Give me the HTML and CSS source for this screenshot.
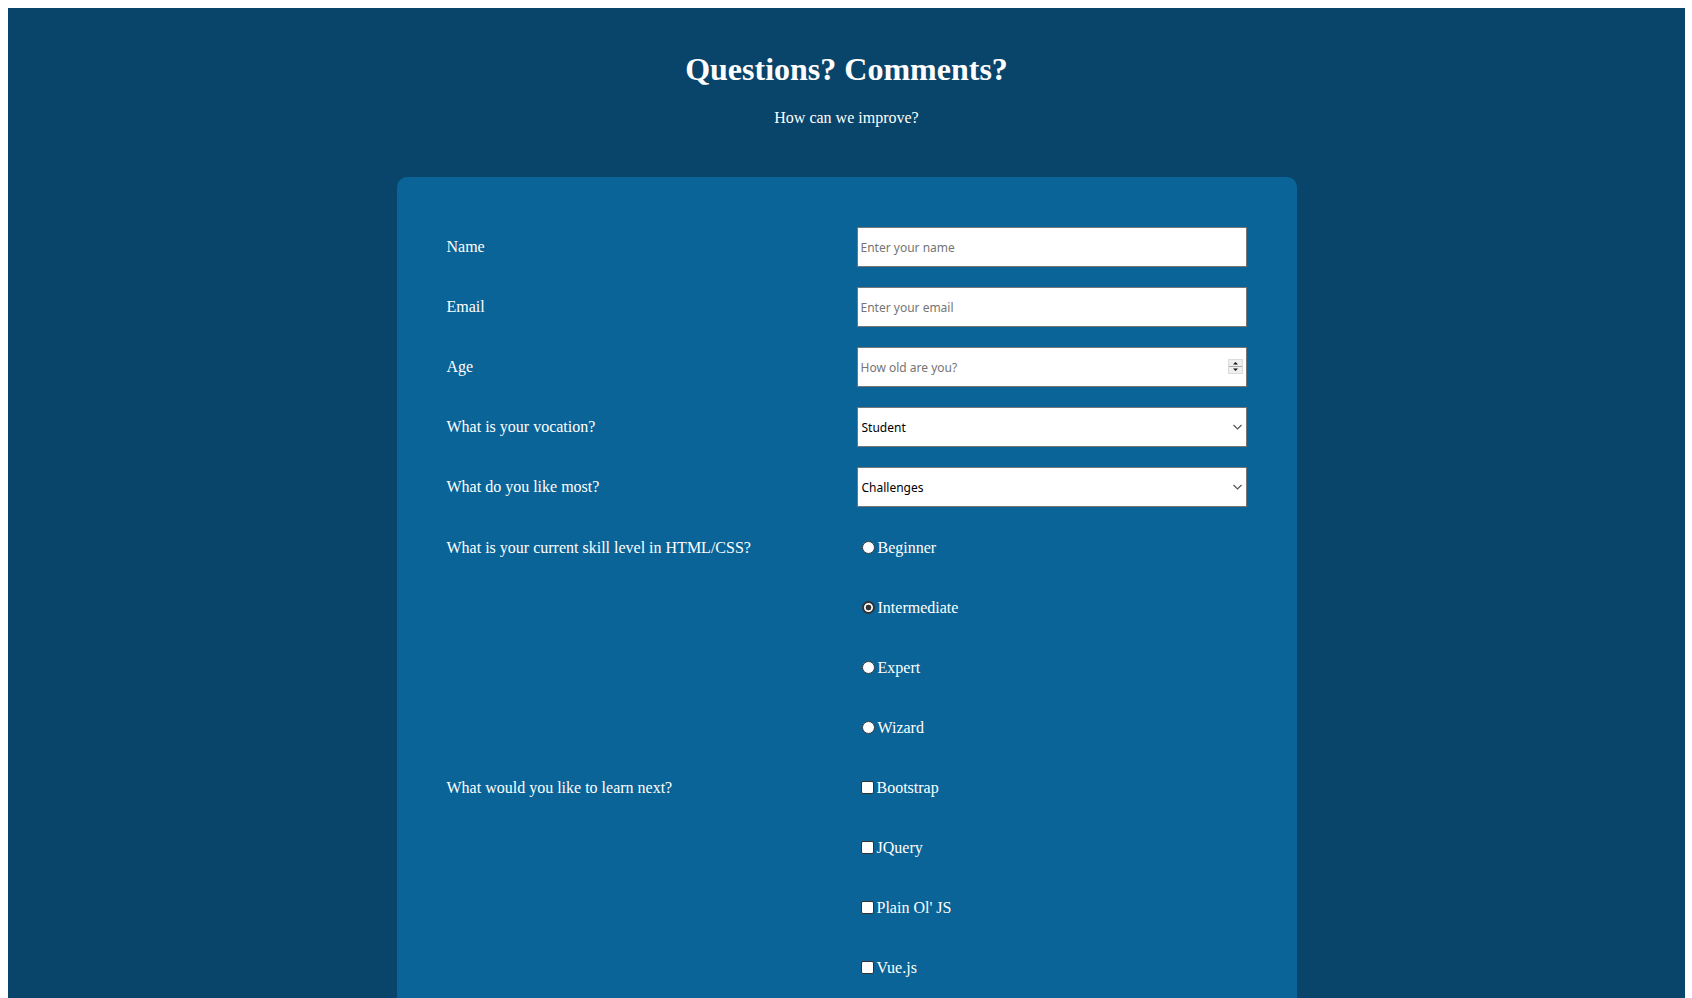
FILE: index.html
```html
<!DOCTYPE html>
<html lang="en">
<head>
<meta charset="utf-8">
<title>Survey Form</title>
<link rel="stylesheet" href="styles.css">
</head>
<body>
<div class="page">
  <header class="intro">
    <h1 class="title">Questions? Comments?</h1>
    <p class="subtitle">How can we improve?</p>
  </header>
  <form class="card">
    <div class="row">
      <label class="row-label" for="name">Name</label>
      <div class="row-field"><input class="text-input" id="name" type="text" placeholder="Enter your name"></div>
    </div>
    <div class="row">
      <label class="row-label" for="email">Email</label>
      <div class="row-field"><input class="text-input" id="email" type="email" placeholder="Enter your email"></div>
    </div>
    <div class="row">
      <label class="row-label" for="age">Age</label>
      <div class="row-field">
        <input class="text-input number-input" id="age" type="number" placeholder="How old are you?">
        <span class="spinner" aria-hidden="true">
          <svg width="15" height="15" viewBox="0 0 15 15">
            <rect x="0.5" y="0.5" width="14" height="14" fill="#efefef" stroke="#dcdcdc"/>
            <line x1="1" y1="7.5" x2="14" y2="7.5" stroke="#a8a8a8"/>
            <path d="M5 5.5 L7.5 3 L10 5.5 Z" fill="#111"/>
            <path d="M5 9.5 L10 9.5 L7.5 12 Z" fill="#111"/>
          </svg>
        </span>
      </div>
    </div>
    <div class="row">
      <label class="row-label" for="vocation">What is your vocation?</label>
      <div class="row-field">
        <select class="select-input" id="vocation">
          <option>Student</option>
          <option>Full-time job</option>
          <option>Prefer not to say</option>
        </select>
        <span class="chevron" aria-hidden="true">
          <svg width="9" height="6" viewBox="0 0 9 6"><path d="M0.5 1 L4.5 5 L8.5 1" fill="none" stroke="#555" stroke-width="1.2"/></svg>
        </span>
      </div>
    </div>
    <div class="row">
      <label class="row-label" for="likes">What do you like most?</label>
      <div class="row-field">
        <select class="select-input" id="likes">
          <option>Challenges</option>
          <option>Projects</option>
          <option>Community</option>
        </select>
        <span class="chevron" aria-hidden="true">
          <svg width="9" height="6" viewBox="0 0 9 6"><path d="M0.5 1 L4.5 5 L8.5 1" fill="none" stroke="#555" stroke-width="1.2"/></svg>
        </span>
      </div>
    </div>
    <div class="row row-group">
      <div class="row-label group-label">What is your current skill level in HTML/CSS?</div>
      <div class="row-field options">
        <label class="option"><input class="radio" type="radio" name="skill" value="beginner">Beginner</label>
        <label class="option"><input class="radio" type="radio" name="skill" value="intermediate" checked>Intermediate</label>
        <label class="option"><input class="radio" type="radio" name="skill" value="expert">Expert</label>
        <label class="option"><input class="radio" type="radio" name="skill" value="wizard">Wizard</label>
      </div>
    </div>
    <div class="row row-group">
      <div class="row-label group-label">What would you like to learn next?</div>
      <div class="row-field options">
        <label class="option"><input class="check" type="checkbox" value="bootstrap">Bootstrap</label>
        <label class="option"><input class="check" type="checkbox" value="jquery">JQuery</label>
        <label class="option"><input class="check" type="checkbox" value="js">Plain Ol' JS</label>
        <label class="option"><input class="check" type="checkbox" value="vue">Vue.js</label>
      </div>
    </div>
  </form>
</div>
</body>
</html>
```

FILE: styles.css
```css
body {
  margin: 8px 7px 8px 8px;
  background: #ffffff;
  font-family: "Liberation Serif", "Times New Roman", serif;
}

.page {
  background: #09456a;
  color: #ffffff;
  padding-bottom: 60px;
}

.intro {
  padding: 43px 0 50px;
  text-align: center;
}

.title {
  margin: 0;
  font-size: 32px;
  font-weight: bold;
}

.subtitle {
  margin: 21px 0 0;
  font-size: 16px;
}

.card {
  width: 900px;
  box-sizing: border-box;
  margin: 0 auto;
  padding: 50px;
  background: #0b6497;
  border-radius: 10px;
}

.row {
  display: flex;
  align-items: center;
  margin-bottom: 20px;
}

.row-group {
  align-items: flex-start;
  padding-top: 1px;
  margin-bottom: 19px;
}

.row-label {
  flex: 0 0 410px;
  font-size: 16px;
  color: #ffffff;
}

.group-label {
  line-height: 40px;
}

.row-field {
  position: relative;
  width: 390px;
}

.text-input,
.select-input {
  display: block;
  width: 100%;
  height: 40px;
  box-sizing: border-box;
  margin: 0;
  border: 1px solid #767676;
  border-radius: 0;
  background: #ffffff;
  font-family: "Noto Sans", "DejaVu Sans", sans-serif;
  font-size: 12px;
  color: #000000;
  outline: none;
}

.text-input {
  padding: 0 3px;
}

.text-input::placeholder {
  color: #757575;
}

.number-input {
  -moz-appearance: textfield;
  appearance: textfield;
}

.number-input::-webkit-inner-spin-button,
.number-input::-webkit-outer-spin-button {
  -webkit-appearance: none;
  margin: 0;
}

.spinner {
  position: absolute;
  right: 4px;
  top: 12px;
  width: 15px;
  height: 15px;
  display: block;
}

.spinner svg,
.chevron svg {
  display: block;
}

.select-input {
  -webkit-appearance: none;
  appearance: none;
  padding: 0 20px 0 4px;
}

.chevron {
  position: absolute;
  right: 5px;
  top: 17px;
  width: 9px;
  height: 6px;
}

.options {
  display: flex;
  flex-direction: column;
}

.option {
  display: flex;
  align-items: center;
  height: 40px;
  margin-bottom: 20px;
  font-size: 16px;
  color: #ffffff;
}

.option:last-child {
  margin-bottom: 0;
}

.radio {
  -webkit-appearance: none;
  appearance: none;
  box-sizing: border-box;
  width: 13px;
  height: 13px;
  margin: 0 3px 1px 5px;
  border: 1px solid #3a3a3a;
  border-radius: 50%;
  background: #ffffff;
}

.radio:checked {
  border: 2px solid #333333;
  background: radial-gradient(circle, #333333 0 2.6px, #ffffff 3.2px);
}

.check {
  -webkit-appearance: none;
  appearance: none;
  box-sizing: border-box;
  width: 13px;
  height: 13px;
  margin: 0 3px 2px 4px;
  border: 1.5px solid #333333;
  border-radius: 2px;
  background: #ffffff;
}
```
